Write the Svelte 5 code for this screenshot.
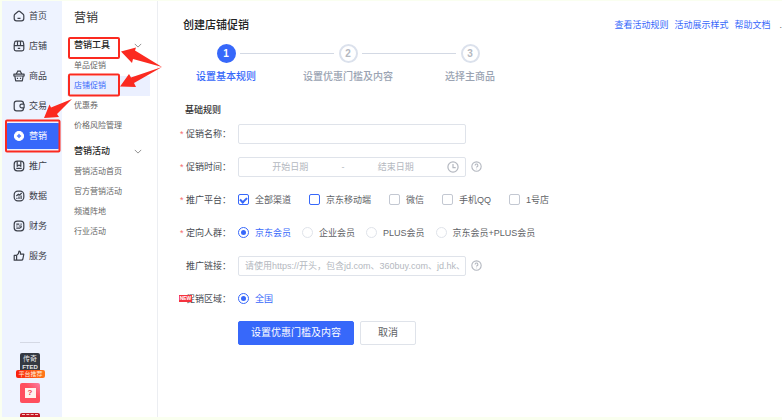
<script>
	let activeNav = $state("营销");
	let activeMenu = $state("店铺促销");
	let audience = $state("京东会员");
	let region = $state("全国");

	const navItems = [
		{ name: "首页", icon: "home" },
		{ name: "店铺", icon: "shop" },
		{ name: "商品", icon: "goods" },
		{ name: "交易", icon: "trade" },
		{ name: "营销", icon: "promo" },
		{ name: "推广", icon: "spread" },
		{ name: "数据", icon: "data" },
		{ name: "财务", icon: "finance" },
		{ name: "服务", icon: "service" }
	];

	const menuGroups = [
		{ title: "营销工具", items: ["单品促销", "店铺促销", "优惠券", "价格风险管理"] },
		{ title: "营销活动", items: ["营销活动首页", "官方营销活动", "频道阵地", "行业活动"] }
	];

	const steps = ["设置基本规则", "设置优惠门槛及内容", "选择主商品"];

	let platforms = $state([
		{ name: "全部渠道", checked: true },
		{ name: "京东移动端", checked: false, focused: true },
		{ name: "微信", checked: false },
		{ name: "手机QQ", checked: false },
		{ name: "1号店", checked: false }
	]);

	const audiences = ["京东会员", "企业会员", "PLUS会员", "京东会员+PLUS会员"];
</script>

{#snippet navIcon(name)}
	<svg class="nav-icon" viewBox="0 0 20 20" aria-hidden="true">
		{#if name === "home"}
			<path d="M8.500 2.600q1.500-1.200 3 0l5 4q1.500 1.200 1.500 3V14q0 4-4 4H6q-4 0-4-4V9.600q0-1.800 1.500-3zM7.500 14h5" />
		{:else if name === "shop"}
			<path d="M5 2h10q2 0 2.300 2L18 8v7q0 3-3 3H5q-3 0-3-3V8l.7-4Q3 2 5 2zM2 9.500h16M7.500 2v7M12.500 2v7M8 14h4" />
		{:else if name === "goods"}
			<path d="M1.500 7h17v3h-17zM3 10l1.500 8h11L17 10M5 7l3-5m7 5-3-5M7 2h6M7.500 13v2m5-2v2" />
		{:else if name === "trade"}
			<path d="M17.500 7V6q0-4-4-4H6Q2 2 2 6v8q0 4 4 4h7.500q4 0 4-4v-1M18.500 7h-4a3 3 0 0 0 0 6h4z" />
		{:else if name === "promo"}
			<circle class="solid" cx="10" cy="10" r="7.500" />
			<path class="cut" d="m10 6.500 1 2.500 2.500 1-2.500 1-1 2.500L9 11l-2.500-1L9 9z" />
		{:else if name === "spread"}
			<rect x="2" y="2" width="16" height="16" rx="5" />
			<path d="M7 2v8.500l3-2 3 2V2M5.500 14h9" />
		{:else if name === "data"}
			<rect x="2" y="2" width="16" height="16" rx="6" />
			<path d="m5.500 10 3.500-3 2 1.500L14.500 5M6.500 15v-2m3.500 2v-4m3.500 4V9" />
		{:else if name === "finance"}
			<rect x="2" y="2" width="16" height="16" rx="5" />
			<path d="M5.500 7h5m2 0h2M5.500 10h2m2 0h5M5.500 13.500h6l3-2.500" />
		{:else}
			<path d="M2 9h4v8H2zM6 9l3-3 1-4q3 0 2.500 5H18l-1.500 8q-.5 2-2.500 2H6" />
		{/if}
	</svg>
{/snippet}

{#snippet helpIcon()}
	<svg class="help" viewBox="0 0 20 20" aria-hidden="true">
		<circle cx="10" cy="10" r="8.500" />
		<path d="M7.500 8a2.500 2.500 0 1 1 3.500 2.300q-1 .5-1 1.700M10 14v1.200" />
	</svg>
{/snippet}

<div class="page">
	<aside class="sidebar">
		<nav>
			{#each navItems as item}
				<button
					type="button"
					class="nav-item"
					class:active={activeNav === item.name}
					onclick={() => (activeNav = item.name)}
				>
					{@render navIcon(item.icon)}
					{item.name}
				</button>
			{/each}
		</nav>
		<div class="apps">
			<div class="app dark">
				<span>传奇</span>
				<b>FTED</b>
				<em>平台推荐</em>
			</div>
			<div class="app pink"><i>?</i></div>
			<div class="app red"><i></i></div>
		</div>
	</aside>

	<aside class="submenu">
		<h2>营销</h2>
		{#each menuGroups as group}
			<section>
				<h3>
					{group.title}
					<svg class="chevron" viewBox="0 0 10 6" aria-hidden="true"><path d="m1 1 4 4 4-4" /></svg>
				</h3>
				{#each group.items as item}
					<button
						type="button"
						class="menu-item"
						class:active={activeMenu === item}
						onclick={() => (activeMenu = item)}
					>{item}</button>
				{/each}
			</section>
		{/each}
	</aside>

	<main>
		<header>
			<h1>创建店铺促销</h1>
			<div class="links">
				<a href="#rules">查看活动规则</a>
				<a href="#style">活动展示样式</a>
				<a href="#docs">帮助文档</a>
				<span>.</span>
			</div>
		</header>

		<ol class="steps">
			{#each steps as step, i}
				<li class:current={i === 0}>
					<span class="num">{i + 1}</span>
					<span>{step}</span>
				</li>
			{/each}
		</ol>

		<h4>基础规则</h4>
		<form onsubmit={(e) => e.preventDefault()}>
			<div class="row">
				<label class="label required" for="name">促销名称：</label>
				<input class="field" id="name" type="text" />
			</div>
			<div class="row">
				<label class="label required" for="start">促销时间：</label>
				<div class="field range">
					<input id="start" type="text" placeholder="开始日期" />
					<span>-</span>
					<input type="text" placeholder="结束日期" aria-label="结束日期" />
					<svg class="clock" viewBox="0 0 20 20" aria-hidden="true">
						<circle cx="10" cy="10" r="8.500" />
						<path d="M10 5v6h4.500" />
					</svg>
				</div>
				{@render helpIcon()}
			</div>
			<div class="row">
				<span class="label required">推广平台：</span>
				<div class="options wide">
					{#each platforms as platform}
						<label>
							<input type="checkbox" class:focused={platform.focused} bind:checked={platform.checked} />
							{platform.name}
						</label>
					{/each}
				</div>
			</div>
			<div class="row">
				<span class="label required">定向人群：</span>
				<div class="options">
					{#each audiences as name}
						<label class:picked={audience === name}>
							<input type="radio" name="audience" value={name} bind:group={audience} />
							{name}
						</label>
					{/each}
				</div>
			</div>
			<div class="row">
				<label class="label" for="link">推广链接：</label>
				<input
					class="field"
					id="link"
					type="text"
					placeholder="请使用https://开头，包含jd.com、360buy.com、jd.hk、"
				/>
				{@render helpIcon()}
			</div>
			<div class="row">
				<span class="label">促销区域：<sup>NEW</sup></span>
				<div class="options">
					<label class:picked={region === "全国"}>
						<input type="radio" name="region" value="全国" bind:group={region} />
						全国
					</label>
				</div>
			</div>
			<div class="actions">
				<button type="submit" class="primary">设置优惠门槛及内容</button>
				<button type="button">取消</button>
			</div>
		</form>
	</main>

	<!-- guide marks over the menus -->
	<svg class="marks" width="170" height="160" viewBox="0 0 170 160" aria-hidden="true">
		<rect x="69" y="38" width="50" height="20" rx="1" />
		<rect x="69" y="74.500" width="50" height="21" rx="1" />
		<rect x="6" y="120.500" width="53.500" height="31" rx="1" />
		<path d="M162 67 135 50.500l1-3-15 4 11 11.500 1-4z" />
		<path d="M162 67l-31 10.500-2-3.500-9 12.500 16 .5-2-4z" />
		<path d="M72 99 51 107.500l-1.500-3L44 118l15-1-2-3z" />
	</svg>
</div>

<style>
	:global(body) {
		background: #fafff0;
	}
	.page {
		position: relative;
		display: flex;
		box-sizing: border-box;
		height: 100vh;
		padding: 1px 0 3px 2px;
		overflow: hidden;
		font-family: "Liberation Sans", "Noto Sans CJK SC", sans-serif;
		font-size: 9px;
		line-height: 14px;
		color: #606266;
	}
	h1,
	h2,
	h3,
	h4,
	ol {
		margin: 0;
		padding: 0;
	}
	button,
	input {
		font: inherit;
		color: inherit;
		box-sizing: border-box;
		margin: 0;
	}
	button {
		cursor: pointer;
	}
	svg {
		fill: none;
		stroke: currentColor;
		flex: none;
	}

	/* left navigation */
	.sidebar {
		flex: none;
		width: 60px;
		background: #eef3ff;
		overflow: hidden;
	}
	nav {
		display: flex;
		flex-direction: column;
		gap: 4px;
		padding: 2px 2px 0 4px;
	}
	.nav-item {
		display: flex;
		align-items: center;
		gap: 4px;
		height: 26px;
		padding: 0 7px;
		border: 0;
		border-radius: 2px;
		background: none;
		color: #3c404a;
		white-space: nowrap;
	}
	.nav-item.active {
		background: #3768fa;
		color: #fff;
	}
	.nav-icon {
		width: 12px;
		height: 12px;
		stroke-width: 2;
		stroke-linejoin: round;
	}
	.solid {
		fill: #fff;
	}
	.cut {
		fill: #3768fa;
		stroke: #3768fa;
		stroke-width: 1;
	}
	.apps {
		display: flex;
		flex-direction: column;
		gap: 10px;
		width: 20px;
		margin: 73px auto 0 18px;
		padding-top: 10px;
		border-top: 1px solid #d4d8e4;
	}
	.app {
		position: relative;
		display: flex;
		flex-direction: column;
		align-items: center;
		height: 20px;
		border-radius: 2px;
	}
	.dark {
		box-sizing: border-box;
		padding-top: 2px;
		background: #343942;
		color: #e8e8e8;
		font-size: 7px;
		line-height: 8px;
	}
	.dark b {
		font-size: 6px;
		line-height: 8px;
	}
	.dark em {
		position: absolute;
		top: 17px;
		left: -4px;
		width: 29px;
		border-radius: 2px;
		background: linear-gradient(90deg, #fa1e0e, #ff7a1a);
		color: #ffe9d8;
		font-size: 6px;
		font-style: normal;
		text-align: center;
		white-space: nowrap;
	}
	.pink {
		justify-content: center;
		background: linear-gradient(45deg, #ff4f5e 60%, #fb7fa4);
	}
	.pink i {
		width: 11px;
		height: 10px;
		background: #fff3ee;
		color: #ee3c50;
		font-size: 8px;
		font-style: normal;
		font-weight: bold;
		line-height: 10px;
		text-align: center;
	}
	.red {
		background: #c41825;
	}
	.red i {
		width: 16px;
		margin-top: 1px;
		border-top: 1px dashed #f6c6c0;
	}

	/* second level menu */
	.submenu {
		flex: none;
		box-sizing: border-box;
		width: 96px;
		padding: 8px 7px 0 5px;
		background: #fff;
		border-right: 1px solid #eceef2;
	}
	h2 {
		margin-bottom: 6px;
		padding-left: 7px;
		font-size: 12px;
		font-weight: 400;
		line-height: 19px;
		color: #333;
	}
	section {
		margin-bottom: 4px;
	}
	h3 {
		display: flex;
		align-items: center;
		justify-content: space-between;
		padding: 0 8px 0 7px;
		font-size: 9px;
		font-weight: 500;
		line-height: 22px;
		color: #222;
	}
	.chevron {
		width: 8px;
		height: 5px;
		color: #777;
	}
	.menu-item {
		display: block;
		width: 100%;
		height: 20px;
		padding: 0 7px;
		border: 0;
		background: none;
		font-size: 8px;
		text-align: left;
		white-space: nowrap;
		color: #666;
	}
	.menu-item.active {
		background: #ebf0ff;
		color: #3768fa;
	}

	/* content */
	main {
		flex: 1;
		min-width: 0;
		padding-top: 14px;
		background: #fff;
	}
	header {
		display: flex;
		align-items: center;
		justify-content: space-between;
		padding: 0 0 0 25px;
		line-height: 20px;
	}
	h1 {
		font-size: 11px;
		font-weight: 500;
		color: #222;
	}
	.links {
		display: flex;
		gap: 6px;
	}
	.links a {
		color: #3768fa;
		text-decoration: none;
	}
	.links span {
		padding-left: 3px;
	}
	.steps {
		display: flex;
		margin: 9px 0 0 7px;
		list-style: none;
	}
	.steps li {
		position: relative;
		display: flex;
		flex-direction: column;
		align-items: center;
		gap: 7px;
		width: 122px;
		font-size: 10px;
		font-weight: 500;
		color: #9aa3b2;
	}
	.steps li:not(:last-child)::after {
		content: "";
		position: absolute;
		top: 9px;
		left: calc(50% + 14px);
		width: calc(100% - 28px);
		height: 1px;
		background: #d3d9e4;
	}
	.num {
		box-sizing: border-box;
		width: 19px;
		height: 19px;
		border: 2px solid #dbe1ec;
		border-radius: 50%;
		font-weight: bold;
		line-height: 15px;
		text-align: center;
		color: #b4b8c0;
	}
	.steps .current {
		color: #3768fa;
	}
	.current .num {
		border-color: #3768fa;
		background: #3768fa;
		color: #fff;
	}
	h4 {
		margin-top: 19px;
		padding-left: 27px;
		font-size: 9px;
		font-weight: 500;
		color: #333;
	}
	form {
		padding-left: 22px;
	}
	.row {
		display: flex;
		align-items: center;
		height: 33px;
	}
	.label {
		position: relative;
		flex: none;
		box-sizing: border-box;
		width: 58px;
		padding-left: 6px;
		color: #484b52;
		white-space: nowrap;
	}
	.required::before {
		content: "*";
		position: absolute;
		left: 0;
		color: #f56c6c;
	}
	.label sup {
		position: absolute;
		top: 3px;
		left: -1px;
		width: 13px;
		height: 7px;
		background: #f5333f;
		color: #fff;
		font-size: 5px;
		font-weight: bold;
		line-height: 7px;
		text-align: center;
	}
	.field {
		flex: 0 1 228px;
		min-width: 0;
		height: 20px;
		padding: 0 2px 0 6px;
		border: 1px solid #dfe3ea;
		border-radius: 2px;
		background: #fff;
		box-sizing: border-box;
	}
	::placeholder {
		color: #b4b8c0;
		opacity: 1;
	}
	.range {
		display: flex;
		align-items: center;
		padding: 0 6px 0 0;
		color: #b4b8c0;
	}
	.range input {
		flex: 1;
		min-width: 0;
		padding: 0;
		border: 0;
		background: none;
		text-align: center;
	}
	.clock {
		width: 12px;
		height: 12px;
		stroke-width: 2;
	}
	.help {
		width: 11px;
		height: 11px;
		margin-left: 5px;
		color: #b4b8c0;
		stroke-width: 2;
	}
	.options {
		display: flex;
		gap: 11px;
		white-space: nowrap;
	}
	.options.wide {
		gap: 18px;
	}
	.options label {
		display: flex;
		align-items: center;
		gap: 6px;
	}
	.options input {
		appearance: none;
		flex: none;
		display: grid;
		place-items: center;
		width: 11px;
		height: 11px;
		border: 1px solid #c3c8d2;
		background: #fff;
	}
	input[type="checkbox"] {
		border-radius: 2px;
	}
	input[type="checkbox"]:checked,
	.options .focused {
		border-color: #3768fa;
	}
	input[type="checkbox"]:checked::before {
		content: "";
		box-sizing: border-box;
		width: 7px;
		height: 5px;
		border: solid #3768fa;
		border-width: 0 0 2px 2px;
		transform: rotate(-45deg);
	}
	.options input[type="radio"] {
		border-color: #dfe3ea;
		border-radius: 50%;
	}
	.options input[type="radio"]:checked {
		border-color: #3768fa;
	}
	input[type="radio"]:checked::before {
		content: "";
		width: 5px;
		height: 5px;
		border-radius: 50%;
		background: #3768fa;
	}
	.picked {
		color: #3768fa;
	}
	.actions {
		display: flex;
		gap: 6px;
		padding: 6px 0 0 58px;
	}
	.actions button {
		height: 24px;
		padding: 0 17px;
		border: 1px solid #dfe3ea;
		border-radius: 2px;
		background: #fff;
		font-size: 10px;
	}
	.actions .primary {
		padding: 0 12px;
		border-color: #3768fa;
		background: #3768fa;
		color: #fff;
	}

	.marks {
		position: absolute;
		top: 0;
		left: 0;
		pointer-events: none;
	}
	.marks rect {
		stroke: #fb2a20;
		stroke-width: 2;
	}
	.marks path {
		fill: #fb2a20;
		stroke: none;
	}
</style>
